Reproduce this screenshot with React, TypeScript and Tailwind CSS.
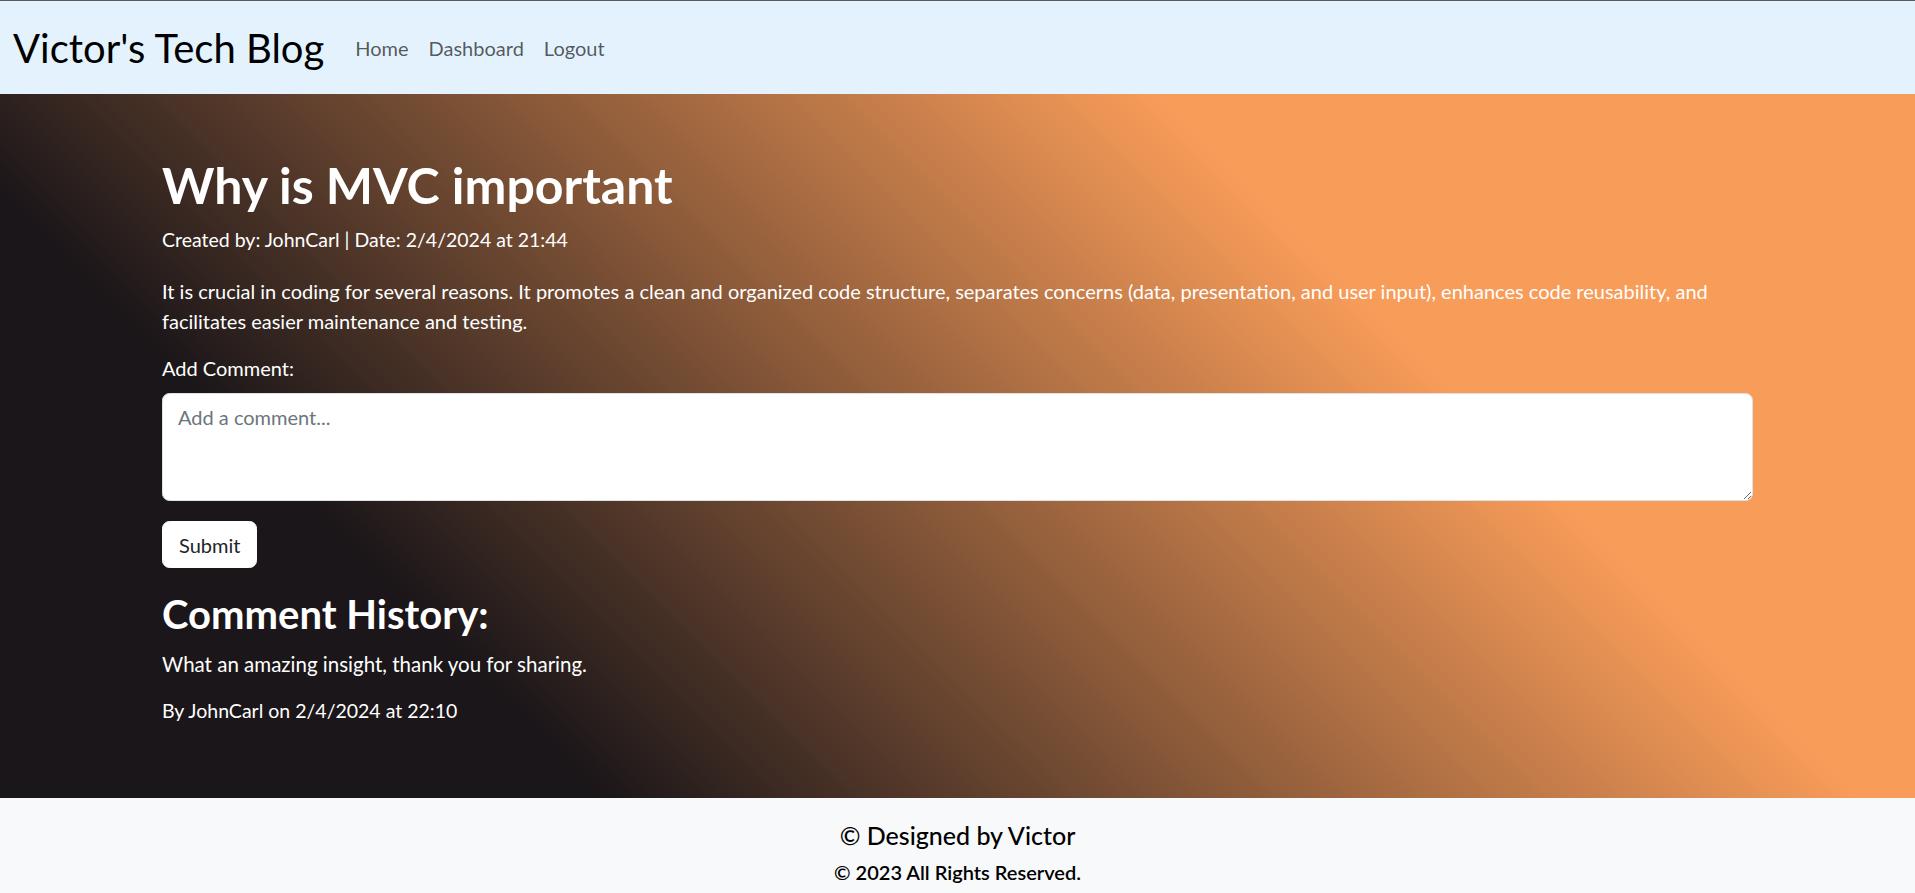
const font = "font-['Lato','Noto_Sans',sans-serif]";

function NavBar() {
  return (
    <nav className="flex h-[94px] items-center border-t border-[#5a5a5a] bg-[#e3f2fd] pl-[13px]">
      <a href="#" className="mr-[21px] text-[40px] leading-[48px] text-black">Victor's Tech Blog</a>
      <ul className="flex items-center">
        {["Home", "Dashboard", "Logout"].map((item) => (
          <li key={item}>
            <a href="#" className="block px-[10px] text-[20px] leading-[30px] text-black/65">{item}</a>
          </li>
        ))}
      </ul>
    </nav>
  );
}

function PostBody() {
  return (
    <main className="flex-1 bg-[linear-gradient(45deg,#1b1619_23%,#f89c59_71%)] px-[162px] pt-[61px] text-white">
      <h1 className="text-[50px] font-bold leading-[60px]">Why is MVC important</h1>
      <p className="mt-[12px] text-[19.5px] leading-[26px]">Created by: JohnCarl | Date: 2/4/2024 at 21:44</p>
      <p className="mt-[23px] text-[20px] leading-[30px]">
        It is crucial in coding for several reasons. It promotes a clean and organized code structure, separates concerns (data, presentation, and user input), enhances code reusability, and facilitates easier maintenance and testing.
      </p>
      <form className="mt-[17px]" onSubmit={(e) => e.preventDefault()}>
        <label htmlFor="comment" className="block text-[20px] leading-[30px]">Add Comment:</label>
        <textarea
          id="comment"
          rows={3}
          placeholder="Add a comment..."
          className="mt-[10px] block h-[108px] w-full rounded-[7.5px] border border-[#dee2e6] bg-white px-[15px] py-[7.5px] text-[20px] leading-[30px] text-[#212529] placeholder:text-[#6c757d]"
        />
        <button type="submit" className="mt-[20px] rounded-[7.5px] border border-white bg-white px-[16px] py-[7.5px] text-[20px] leading-[30px] text-[#212529]">
          Submit
        </button>
      </form>
      <h2 className="mt-[22px] text-[40px] font-bold leading-[48px]">Comment History:</h2>
      <p className="mt-[11px] text-[20.5px] leading-[30px]">What an amazing insight, thank you for sharing.</p>
      <p className="mt-[17px] text-[19.5px] leading-[30px]">By JohnCarl on 2/4/2024 at 22:10</p>
    </main>
  );
}

function Footer() {
  return (
    <footer className="flex h-[95px] flex-col items-center bg-[#f8f9fa] pt-[22px] text-black">
      <h5 className="text-[25px] font-medium leading-[30px]">© Designed by Victor</h5>
      <p className="mt-[10px] text-[20px] font-semibold leading-[24px]">© 2023 All Rights Reserved.</p>
    </footer>
  );
}

export default function App() {
  return (
    <div className={`flex min-h-screen flex-col ${font}`}>
      <NavBar />
      <PostBody />
      <Footer />
    </div>
  );
}
